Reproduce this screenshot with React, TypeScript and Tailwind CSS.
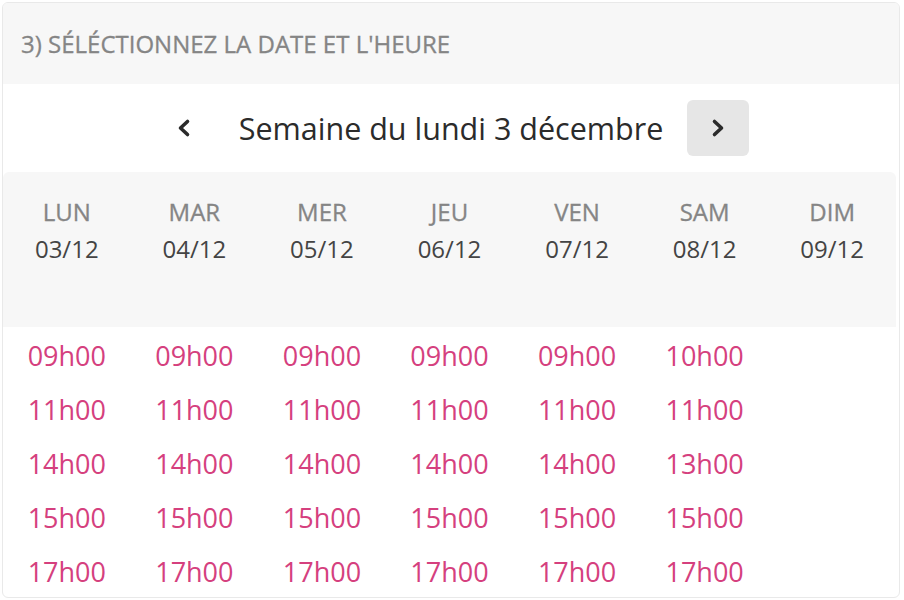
import React from "react";

const days = [
  { name: "LUN", date: "03/12", slots: ["09h00", "11h00", "14h00", "15h00", "17h00"] },
  { name: "MAR", date: "04/12", slots: ["09h00", "11h00", "14h00", "15h00", "17h00"] },
  { name: "MER", date: "05/12", slots: ["09h00", "11h00", "14h00", "15h00", "17h00"] },
  { name: "JEU", date: "06/12", slots: ["09h00", "11h00", "14h00", "15h00", "17h00"] },
  { name: "VEN", date: "07/12", slots: ["09h00", "11h00", "14h00", "15h00", "17h00"] },
  { name: "SAM", date: "08/12", slots: ["10h00", "11h00", "13h00", "15h00", "17h00"] },
  { name: "DIM", date: "09/12", slots: [] as string[] },
];

function Chevron({ dir }: { dir: "left" | "right" }) {
  return (
    <svg width="16" height="20" viewBox="0 0 16 20" fill="none">
      <path
        d={dir === "left" ? "M11.5 3.5 L4.5 10 L11.5 16.5" : "M4.5 3.5 L11.5 10 L4.5 16.5"}
        stroke="#2b2b2b"
        strokeWidth="3.6"
        strokeLinecap="round"
        strokeLinejoin="round"
      />
    </svg>
  );
}

export default function App() {
  return (
    <div
      className="w-[904px] h-[600px] bg-white pl-[2px] pr-[4px] py-[2px]"
      style={{ fontFamily: '"Open Sans", "Noto Sans", sans-serif' }}
    >
      <div className="h-full border border-[#e9e9e9] rounded-md overflow-hidden bg-white flex flex-col">
        {/* Title */}
        <div className="h-[81px] shrink-0 bg-[#f7f7f7] flex items-center px-[18px]">
          <h2 className="text-[24px] text-[#858585] uppercase [-webkit-text-stroke:0.3px_#858585]">
            3) Séléctionnez la date et l'heure
          </h2>
        </div>

        {/* Week navigation */}
        <div className="h-[88px] shrink-0 flex items-center justify-center gap-6">
          <button className="w-[62px] h-[56px] rounded-md flex items-center justify-center">
            <Chevron dir="left" />
          </button>
          <span className="text-[30.5px] leading-[40px] text-[#2b2b2b]">
            Semaine du lundi 3 décembre
          </span>
          <button className="w-[62px] h-[56px] rounded-md bg-[#e6e6e6] flex items-center justify-center">
            <Chevron dir="right" />
          </button>
        </div>

        {/* Day headers */}
        <div className="w-[893px] h-[155px] shrink-0 rounded-t-md bg-[#f7f7f7] grid grid-cols-7 pt-6">
          {days.map((d) => (
            <div key={d.name} className="flex flex-col items-center">
              <span className="h-[32px] leading-[32px] text-[24px] text-[#858585] [-webkit-text-stroke:0.3px_#858585]">
                {d.name}
              </span>
              <span className="h-[32px] leading-[32px] mt-[5px] text-[24px] text-[#444444]">
                {d.date}
              </span>
            </div>
          ))}
        </div>

        {/* Time slots */}
        <div className="w-[893px] grid grid-cols-7 pt-[2px]">
          {days.map((d) => (
            <div key={d.name} className="flex flex-col items-center">
              {d.slots.map((s) => (
                <button
                  key={s}
                  className="h-[54px] leading-[54px] text-[27px] text-[#d5407e]"
                >
                  {s}
                </button>
              ))}
            </div>
          ))}
        </div>
      </div>
    </div>
  );
}
